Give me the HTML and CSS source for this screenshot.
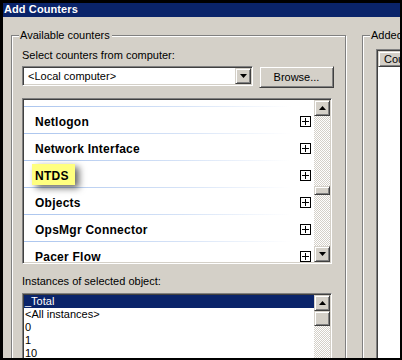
FILE: index.html
```html
<!DOCTYPE html>
<html>
<head>
<meta charset="utf-8">
<title>Add Counters</title>
<link rel="stylesheet" href="styles.css">
</head>
<body>
<div class="frame">
  <div class="window">
    <div class="titlebar">Add Counters</div>
    <div class="client">
      <div class="group group-avail">
        <span class="legend">Available counters</span>
        <div class="label">Select counters from computer:</div>
        <div class="combo-row">
          <div class="combo">
            <span class="combo-text">&lt;Local computer&gt;</span>
            <span class="raised dropbtn"><svg width="7" height="4" viewBox="0 0 7 4"><polygon points="0,0 7,0 3.5,4" fill="#000"/></svg></span>
          </div>
          <div class="raised button">Browse...</div>
        </div>
        <div class="sunken listbox counters">
          <div class="list-body">
            <div class="row partial"></div>
            <div class="row"><span class="name">Netlogon</span><svg class="plus" width="11" height="11" viewBox="0 0 11 11"><rect x="0.5" y="0.5" width="10" height="10" fill="#fff" stroke="#000"/><path d="M2 5.5H9M5.5 2V9" stroke="#000"/></svg></div>
            <div class="row"><span class="name">Network Interface</span><svg class="plus" width="11" height="11" viewBox="0 0 11 11"><rect x="0.5" y="0.5" width="10" height="10" fill="#fff" stroke="#000"/><path d="M2 5.5H9M5.5 2V9" stroke="#000"/></svg></div>
            <div class="row"><span class="name highlight">NTDS</span><svg class="plus" width="11" height="11" viewBox="0 0 11 11"><rect x="0.5" y="0.5" width="10" height="10" fill="#fff" stroke="#000"/><path d="M2 5.5H9M5.5 2V9" stroke="#000"/></svg></div>
            <div class="row"><span class="name">Objects</span><svg class="plus" width="11" height="11" viewBox="0 0 11 11"><rect x="0.5" y="0.5" width="10" height="10" fill="#fff" stroke="#000"/><path d="M2 5.5H9M5.5 2V9" stroke="#000"/></svg></div>
            <div class="row"><span class="name">OpsMgr Connector</span><svg class="plus" width="11" height="11" viewBox="0 0 11 11"><rect x="0.5" y="0.5" width="10" height="10" fill="#fff" stroke="#000"/><path d="M2 5.5H9M5.5 2V9" stroke="#000"/></svg></div>
            <div class="row"><span class="name">Pacer Flow</span><svg class="plus" width="11" height="11" viewBox="0 0 11 11"><rect x="0.5" y="0.5" width="10" height="10" fill="#fff" stroke="#000"/><path d="M2 5.5H9M5.5 2V9" stroke="#000"/></svg></div>
          </div>
          <div class="scrollbar">
            <div class="raised sb-btn"><svg width="7" height="4" viewBox="0 0 7 4"><polygon points="3.5,0 7,4 0,4" fill="#000"/></svg></div>
            <div class="sb-track"><div class="raised sb-thumb thumb-counters"></div></div>
            <div class="raised sb-btn"><svg width="7" height="4" viewBox="0 0 7 4"><polygon points="0,0 7,0 3.5,4" fill="#000"/></svg></div>
          </div>
        </div>
        <div class="label label-inst">Instances of selected object:</div>
        <div class="sunken listbox instances">
          <div class="list-body">
            <div class="inst selected">_Total</div>
            <div class="inst">&lt;All instances&gt;</div>
            <div class="inst">0</div>
            <div class="inst">1</div>
            <div class="inst">10</div>
            <div class="inst">11</div>
          </div>
          <div class="scrollbar">
            <div class="raised sb-btn"><svg width="7" height="4" viewBox="0 0 7 4"><polygon points="3.5,0 7,4 0,4" fill="#000"/></svg></div>
            <div class="sb-track"><div class="raised sb-thumb thumb-inst"></div></div>
          </div>
        </div>
      </div>
      <div class="group group-added">
        <span class="legend">Added counters</span>
        <div class="sunken addlist">
          <div class="raised header">Counter</div>
        </div>
      </div>
    </div>
  </div>
</div>
</body>
</html>
```
FILE: styles.css
```css
html, body {
  margin: 0;
  padding: 0;
  background: #000;
}

.frame {
  width: 402px;
  height: 360px;
  box-sizing: border-box;
  padding: 3px 2px 2px 3px;
  background: #000;
  overflow: hidden;
  font-family: "Liberation Sans", Arial, sans-serif;
  font-size: 11px;
  color: #000;
}

.window {
  width: 397px;
  height: 355px;
  background: #d4d0c8;
  display: flex;
  flex-direction: column;
  overflow: hidden;
}

.titlebar {
  height: 14px;
  flex: none;
  background: #0a246a;
  color: #fff;
  font-weight: bold;
  font-size: 11px;
  line-height: 12px;
  padding-left: 1px;
  letter-spacing: 0.1px;
  white-space: nowrap;
}

.client {
  flex: 1;
  display: flex;
  align-items: flex-start;
  gap: 16px;
  padding: 18px 0 0 8px;
  overflow: hidden;
}

.group {
  position: relative;
  flex: none;
  height: 400px;
  border: 1px solid #808080;
  box-shadow: inset 1px 1px 0 #fff, 1px 1px 0 #fff;
  box-sizing: border-box;
}

.legend {
  position: absolute;
  top: -7px;
  left: 7px;
  background: #d4d0c8;
  padding: 0 2px 0 1px;
  line-height: 13px;
  white-space: nowrap;
}

.group-avail {
  width: 335px;
  padding: 13px 0 0 10px;
}

.group-added {
  width: 100px;
  padding: 13px 0 0 13px;
}

.label {
  line-height: 13px;
  white-space: nowrap;
}

.label-inst {
  margin-top: 11px;
}

.raised {
  box-sizing: border-box;
  background: #d4d0c8;
  border: 1px solid;
  border-color: #d4d0c8 #404040 #404040 #d4d0c8;
  box-shadow: inset 1px 1px 0 #fff, inset -1px -1px 0 #808080;
}

.sunken {
  box-sizing: border-box;
  background: #fff;
  border: 1px solid;
  border-color: #808080 #fff #fff #808080;
  box-shadow: inset 1px 1px 0 #404040, inset -1px -1px 0 #d4d0c8;
}

.combo-row {
  display: flex;
  align-items: flex-start;
  gap: 6px;
  margin-top: 4px;
}

.combo {
  width: 231px;
  height: 20px;
  box-sizing: border-box;
  background: #fff;
  border: 1px solid;
  border-color: #808080 #fff #fff #808080;
  box-shadow: inset 1px 1px 0 #404040, inset -1px -1px 0 #d4d0c8;
  display: flex;
  align-items: center;
}

.combo-text {
  flex: 1;
  padding-left: 5px;
  line-height: 13px;
  white-space: nowrap;
}

.dropbtn {
  width: 16px;
  height: 16px;
  margin-right: 1px;
  display: flex;
  align-items: center;
  justify-content: center;
}

.button {
  width: 75px;
  height: 22px;
  display: flex;
  align-items: center;
  justify-content: center;
  line-height: 13px;
}

.listbox {
  width: 310px;
  display: flex;
  padding: 1px;
  overflow: hidden;
}

.counters {
  height: 166px;
  margin-top: 10px;
}

.instances {
  height: 100px;
  margin-top: 5px;
}

.list-body {
  flex: 1;
  overflow: hidden;
  min-width: 0;
}

.row {
  display: flex;
  align-items: flex-start;
  height: 27px;
  box-sizing: border-box;
  padding-left: 11px;
  background: linear-gradient(to right, #abc5ee 0%, #d6e3f7 55%, #ffffff 92%) left bottom / 100% 1px no-repeat;
}

.row.partial {
  height: 7px;
}

.name {
  font-weight: bold;
  font-size: 12px;
  letter-spacing: 0.25px;
  line-height: 12px;
  padding-top: 8.5px;
  white-space: nowrap;
}

.name.highlight {
  margin-top: 3px;
  margin-left: -3px;
  padding: 5.5px 6px 3.5px 3px;
  background: #ffff80;
  box-shadow: 4px 3px 7px rgba(0, 0, 0, 0.6);
}

.plus {
  margin-left: auto;
  margin-right: 3px;
  margin-top: 9px;
  flex: none;
}

.scrollbar {
  width: 16px;
  flex: none;
  display: flex;
  flex-direction: column;
}

.sb-btn {
  width: 16px;
  height: 16px;
  flex: none;
  display: flex;
  align-items: center;
  justify-content: center;
}

.sb-track {
  flex: 1;
  background: repeating-conic-gradient(#ffffff 0 25%, #d4d0c8 0 50%) 0 0 / 2px 2px;
}

.sb-thumb {
  width: 16px;
}

.thumb-counters {
  margin-top: 70px;
  height: 9px;
}

.thumb-inst {
  height: 15px;
}

.inst {
  line-height: 13px;
  padding-left: 1px;
  white-space: nowrap;
}

.inst.selected {
  background: #0a246a;
  color: #fff;
}

.addlist {
  width: 80px;
  height: 320px;
  padding: 1px;
}

.header {
  height: 16px;
  line-height: 14px;
  padding-left: 5px;
  white-space: nowrap;
}
```
